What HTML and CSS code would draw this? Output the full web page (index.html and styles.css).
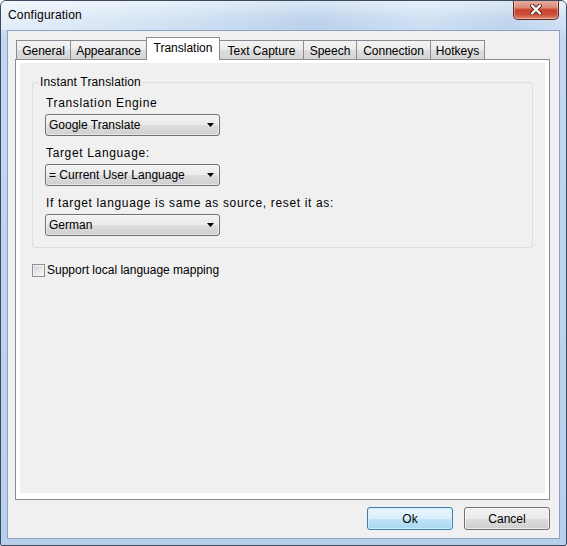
FILE: index.html
```html
<!DOCTYPE html>
<html>
<head>
<meta charset="utf-8">
<title>Configuration</title>
<link rel="stylesheet" href="styles.css">
</head>
<body>
<div class="window">
  <div class="titlebar">
    <span class="title">Configuration</span>
    <div class="close">
      <svg width="12" height="11" viewBox="0 0 12 11">
        <path d="M2 1.5 L10 9.5 M10 1.5 L2 9.5" stroke="#5a2219" stroke-width="4.2" stroke-linecap="round" fill="none"/>
        <path d="M2 1.5 L10 9.5 M10 1.5 L2 9.5" stroke="#ffffff" stroke-width="2.4" stroke-linecap="round" fill="none"/>
      </svg>
    </div>
  </div>
  <div class="client">
    <div class="tabs">
      <div class="tab w-general">General</div>
      <div class="tab w-appearance">Appearance</div>
      <div class="tab selected w-translation">Translation</div>
      <div class="tab w-capture">Text Capture</div>
      <div class="tab w-speech">Speech</div>
      <div class="tab w-connection">Connection</div>
      <div class="tab w-hotkeys">Hotkeys</div>
    </div>
    <div class="panel">
      <div class="page">
        <fieldset class="group">
          <legend>Instant Translation</legend>
          <div class="label">Translation Engine</div>
          <div class="combo"><span>Google Translate</span><svg class="arrow" width="7" height="4" viewBox="0 0 7 4"><path d="M0 0 H7 L3.5 4 Z" fill="#000"/></svg></div>
          <div class="label gap">Target Language:</div>
          <div class="combo"><span>= Current User Language</span><svg class="arrow" width="7" height="4" viewBox="0 0 7 4"><path d="M0 0 H7 L3.5 4 Z" fill="#000"/></svg></div>
          <div class="label gap">If target language is same as source, reset it as:</div>
          <div class="combo"><span>German</span><svg class="arrow" width="7" height="4" viewBox="0 0 7 4"><path d="M0 0 H7 L3.5 4 Z" fill="#000"/></svg></div>
        </fieldset>
        <div class="check"><span class="box"></span><span>Support local language mapping</span></div>
      </div>
    </div>
    <div class="buttons">
      <div class="btn default">Ok</div>
      <div class="btn">Cancel</div>
    </div>
  </div>
</div>
</body>
</html>
```

FILE: styles.css
```css
* { box-sizing: border-box; }
html, body { margin: 0; background: #ffffff; }
body {
  font-family: "Liberation Sans", Arial, sans-serif;
  font-size: 12px;
  color: #000;
}
.window {
  width: 567px;
  height: 546px;
  border: 1px solid #3a4b60;
  border-radius: 6px 6px 2px 2px;
  background: linear-gradient(180deg, #d9e7f6 0, #c3d8f0 40px, #b8d0ec 100%);
  display: flex;
  flex-direction: column;
  overflow: hidden;
}
.titlebar {
  height: 29px;
  flex: none;
  display: flex;
  justify-content: space-between;
  align-items: flex-start;
  padding-left: 7px;
  background:
    linear-gradient(180deg, rgba(255,255,255,0.35) 0, rgba(255,255,255,0) 60%),
    linear-gradient(90deg, rgba(255,255,255,0.5) 0, rgba(255,255,255,0.1) 30%, rgba(140,175,215,0.25) 55%, rgba(255,255,255,0.05) 75%, rgba(140,175,215,0.2) 90%, rgba(255,255,255,0.1) 100%);
}
.title {
  line-height: 29px;
  letter-spacing: 0.2px;
  color: #000;
}
.close {
  width: 46px;
  height: 20px;
  margin-top: -1px;
  margin-right: 7px;
  border: 1px solid #5e2a22;
  border-top: none;
  border-radius: 0 0 5px 5px;
  background: linear-gradient(180deg, #eab0a2 0, #dc8a76 40%, #c8442d 52%, #cd4d36 75%, #e08a6f 100%);
  box-shadow: inset 0 0 0 1px rgba(255,255,255,0.35);
  display: flex;
  align-items: center;
  justify-content: center;
}
.client {
  flex: 1;
  margin: 0 6px 6px;
  border: 1px solid #8ba3c1;
  background: #f0f0f0;
  display: flex;
  flex-direction: column;
  padding: 6px 9px 8px 7px;
}
.tabs {
  height: 22px;
  flex: none;
  display: flex;
  align-items: flex-end;
  padding-left: 1px;
}
.tab {
  height: 19px;
  border: 1px solid #898c95;
  border-bottom: none;
  margin-left: -1px;
  background: linear-gradient(180deg, #f3f3f3 0, #ebebeb 50%, #dedede 51%, #d4d4d4 100%);
  display: flex;
  align-items: center;
  justify-content: center;
  white-space: nowrap;
  padding-top: 1px;
}
.tab:first-child { margin-left: 0; }
.tab.selected {
  height: 23px;
  margin-bottom: -1px;
  background: #ffffff;
  position: relative;
  z-index: 1;
  align-items: flex-start;
  padding-top: 3px;
}
.w-general { width: 55px; }
.w-appearance { width: 77px; }
.w-translation { width: 74px; }
.w-capture { width: 85px; }
.w-speech { width: 54px; }
.w-connection { width: 75px; }
.w-hotkeys { width: 55px; }

.panel {
  flex: 1;
  border: 1px solid #898c95;
  background: #ffffff;
  padding: 3px 4px 6px 4px;
  display: flex;
}
.page {
  flex: 1;
  background: #f0f0f0;
  display: flex;
  flex-direction: column;
}
.group {
  margin: 11px 12px 0 12px;
  border: 1px solid #d5dfe5;
  border-radius: 3px;
  padding: 5px 12px 11px 12px;
  min-width: 0;
}
.group legend {
  padding: 0 2px;
  margin-left: -7px;
  line-height: 16px;
  letter-spacing: 0.15px;
}
.label {
  line-height: 16px;
  padding-left: 1px;
  margin-bottom: 3px;
  letter-spacing: 0.65px;
}
.label.gap { margin-top: 9px; }
.combo {
  width: 175px;
  height: 22px;
  border: 1px solid #707070;
  border-radius: 3px;
  background: linear-gradient(180deg, #f2f2f2 0, #ebebeb 50%, #dddddd 51%, #cfcfcf 100%);
  box-shadow: inset 0 0 0 1px rgba(255,255,255,0.5);
  display: flex;
  align-items: center;
  justify-content: space-between;
  padding: 0 5px 0 3px;
}
.check {
  margin: 15px 0 0 12px;
  display: flex;
  align-items: center;
  gap: 2px;
  line-height: 15px;
}
.box {
  width: 13px;
  height: 13px;
  border: 1px solid #8f8f8f;
  background: linear-gradient(135deg, #cfd2d6 0, #eeeeee 70%, #fafafa 100%);
  box-shadow: inset 0 0 0 1px #f4f4f4;
}
.buttons {
  flex: none;
  display: flex;
  justify-content: flex-end;
  gap: 11px;
  margin-top: 7px;
}
.btn {
  width: 86px;
  height: 23px;
  border: 1px solid #707070;
  border-radius: 3px;
  background: linear-gradient(180deg, #f2f2f2 0, #ebebeb 50%, #dddddd 51%, #cfcfcf 100%);
  box-shadow: inset 0 0 0 1px rgba(255,255,255,0.6);
  display: flex;
  align-items: center;
  justify-content: center;
}
.btn.default {
  border-color: #3c7fb1;
  background: linear-gradient(180deg, #e9f5fc 0, #d8eefb 50%, #bfe3f7 51%, #a9d6f1 100%);
  box-shadow: inset 0 0 0 1px rgba(210,240,255,0.9);
}
```
